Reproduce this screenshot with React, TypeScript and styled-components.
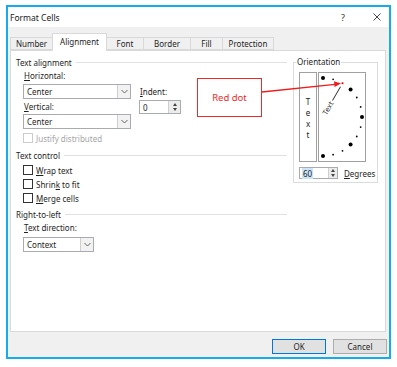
import React from "react";
import styled, { createGlobalStyle } from "styled-components";

const GlobalStyle = createGlobalStyle`
  html, body {
    margin: 0;
    padding: 0;
    background: #ffffff;
  }
  body {
    font-family: "Noto Sans", "Open Sans", sans-serif;
    font-size: 8px;
    color: #1e1e1e;
  }
`;

const Page = styled.div`
  position: relative;
  width: 397px;
  height: 367px;
  padding: 5px 0 0 6px;
  box-sizing: border-box;
  background: #ffffff;
`;

const Window = styled.div`
  width: 385px;
  height: 354px;
  box-sizing: border-box;
  border: 2px solid #16acec;
  background: #f0f0f0;
  display: flex;
  flex-direction: column;
`;

const TitleBar = styled.div`
  height: 20px;
  flex-shrink: 0;
  background: #ffffff;
  display: flex;
  align-items: center;
  padding-left: 2px;
`;

const Title = styled.span`
  font-size: 8.5px;
  color: #1a1a1a;
`;

const TitleButton = styled.span<{ $push?: boolean }>`
  width: 24px;
  height: 20px;
  display: flex;
  align-items: center;
  justify-content: center;
  margin-left: ${(p) => (p.$push ? "auto" : "10px")};
  font-size: 9px;
  color: #333;
`;

const TabRow = styled.div`
  height: 23px;
  flex-shrink: 0;
  display: flex;
  align-items: flex-end;
  padding-left: 2px;
`;

const Tab = styled.div<{ $w: number; $active?: boolean }>`
  position: relative;
  z-index: ${(p) => (p.$active ? 2 : 1)};
  width: ${(p) => p.$w}px;
  height: ${(p) => (p.$active ? 18 : 13)}px;
  margin-left: -1px;
  margin-bottom: ${(p) => (p.$active ? -1 : 0)}px;
  box-sizing: border-box;
  border: 1px solid #d9d9d9;
  border-bottom: ${(p) => (p.$active ? "none" : "1px solid #d9d9d9")};
  background: ${(p) => (p.$active ? "#ffffff" : "#f0f0f0")};
  display: flex;
  align-items: ${(p) => (p.$active ? "flex-start" : "center")};
  padding-top: ${(p) => (p.$active ? 2 : 0)}px;
  justify-content: center;
  font-size: 8px;
  &:first-child {
    margin-left: 0;
  }
`;

const Panel = styled.div`
  height: 282px;
  flex-shrink: 0;
  margin: 0 3px 0 2px;
  box-sizing: border-box;
  border: 1px solid #d9d9d9;
  background: #ffffff;
  display: flex;
  align-items: flex-start;
  padding: 5px 0 0 5px;
`;

const LeftColumn = styled.div`
  width: 271px;
  display: flex;
  flex-direction: column;
`;

const SectionHeader = styled.div<{ $mt?: number }>`
  height: 12px;
  margin-top: ${(p) => p.$mt ?? 0}px;
  display: flex;
  align-items: center;
  gap: 4px;
  white-space: nowrap;
  &::after {
    content: "";
    flex: 1;
    height: 1px;
    background: #e0e0e0;
  }
`;

const Indented = styled.div`
  padding-left: 7px;
  display: flex;
  flex-direction: column;
`;

const Label = styled.div<{ $mt?: number }>`
  height: 12px;
  line-height: 12px;
  margin-top: ${(p) => p.$mt ?? 0}px;
  padding-left: 1px;
  white-space: nowrap;
`;

const Accel = styled.span`
  text-decoration: underline;
  text-underline-offset: 1px;
`;

const AlignRow = styled.div`
  display: flex;
  gap: 8px;
`;

const Stack = styled.div<{ $mt?: number }>`
  display: flex;
  flex-direction: column;
  margin-top: ${(p) => p.$mt ?? 0}px;
`;

const Select = styled.div<{ $w: number; $mt?: number }>`
  width: ${(p) => p.$w}px;
  height: 15px;
  margin-top: ${(p) => p.$mt ?? 0}px;
  box-sizing: border-box;
  border: 1px solid #a9abb0;
  background: #ffffff;
  display: flex;
`;

const SelectValue = styled.span`
  flex: 1;
  padding-left: 3px;
  line-height: 13px;
`;

const DropButton = styled.span`
  width: 12px;
  border-left: 1px solid #cfcfcf;
  background: #f2f2f2;
  display: flex;
  align-items: center;
  justify-content: center;
`;

const Spinner = styled.div<{ $w: number; $h: number; $mt?: number }>`
  width: ${(p) => p.$w}px;
  height: ${(p) => p.$h}px;
  margin-top: ${(p) => p.$mt ?? 0}px;
  box-sizing: border-box;
  border: 1px solid #a9abb0;
  background: #ffffff;
  display: flex;
`;

const SpinValue = styled.span<{ $sel?: boolean }>`
  flex: 1;
  padding-left: 2px;
  display: flex;
  align-items: center;
  span {
    background: ${(p) => (p.$sel ? "#cce4f7" : "transparent")};
    padding: 0 1px;
  }
`;

const SpinButtons = styled.span<{ $w: number }>`
  width: ${(p) => p.$w}px;
  border-left: 1px solid #cfcfcf;
  background: #ececec;
  display: flex;
  flex-direction: column;
  align-items: center;
  justify-content: space-evenly;
`;

const Arrow = styled.span<{ $up?: boolean }>`
  width: 0;
  height: 0;
  border-left: 2.5px solid transparent;
  border-right: 2.5px solid transparent;
  ${(p) => (p.$up ? "border-bottom: 3px solid #444;" : "border-top: 3px solid #444;")}
`;

const CheckRow = styled.div<{ $mt?: number; $disabled?: boolean }>`
  height: 12px;
  margin-top: ${(p) => p.$mt ?? 0}px;
  display: flex;
  align-items: center;
  gap: 3px;
  color: ${(p) => (p.$disabled ? "#a6a6a6" : "#1e1e1e")};
`;

const CheckBox = styled.span<{ $disabled?: boolean }>`
  width: 10px;
  height: 10px;
  box-sizing: border-box;
  border: 1px solid ${(p) => (p.$disabled ? "#cccccc" : "#333333")};
  background: #ffffff;
`;

const Group = styled.div`
  position: relative;
  width: 85px;
  height: 121px;
  margin: 6px 0 0 6px;
  box-sizing: border-box;
  border: 1px solid #dcdcdc;
  padding: 9px 0 0 5px;
`;

const Legend = styled.span`
  position: absolute;
  top: -7px;
  left: 2px;
  padding: 0 1px;
  background: #ffffff;
  line-height: 12px;
`;

const DialRow = styled.div`
  display: flex;
  gap: 1px;
`;

const VerticalText = styled.div`
  width: 18px;
  height: 90px;
  box-sizing: border-box;
  border: 1px solid #a0a0a0;
  display: flex;
  flex-direction: column;
  align-items: center;
  justify-content: center;
  line-height: 11px;
  padding-top: 1px;
`;

const DialBox = styled.div`
  width: 48px;
  height: 90px;
  box-sizing: border-box;
  border: 1px solid #a0a0a0;
  svg {
    display: block;
  }
`;

const DegreesRow = styled.div`
  display: flex;
  align-items: center;
  margin-top: 5px;
  gap: 6px;
`;

const Footer = styled.div`
  flex: 1;
  display: flex;
  justify-content: flex-end;
  align-items: flex-start;
  padding: 7px 2px 0 0;
  gap: 7px;
`;

const Button = styled.div<{ $primary?: boolean }>`
  width: 54px;
  height: 15px;
  box-sizing: border-box;
  border: 1px solid ${(p) => (p.$primary ? "#0078d7" : "#adadad")};
  background: #e1e1e1;
  display: flex;
  align-items: center;
  justify-content: center;
  font-size: 8px;
`;

const Callout = styled.div`
  position: absolute;
  left: 197px;
  top: 78px;
  width: 65px;
  height: 39px;
  box-sizing: border-box;
  border: 1px solid #ee2a2a;
  background: #ffffff;
  display: flex;
  align-items: center;
  justify-content: center;
  color: #ee2a2a;
  font-size: 9.5px;
`;

const Overlay = styled.svg`
  position: absolute;
  left: 0;
  top: 0;
  pointer-events: none;
`;

const Chevron = () => (
  <svg width="7" height="5" viewBox="0 0 7 5">
    <path d="M0.5 1 L3.5 4 L6.5 1" fill="none" stroke="#555" strokeWidth="0.9" />
  </svg>
);

const tabs = [
  { name: "Number", w: 43 },
  { name: "Alignment", w: 55, active: true },
  { name: "Font", w: 38 },
  { name: "Border", w: 48 },
  { name: "Fill", w: 33 },
  { name: "Protection", w: 52 },
];

// dots around the dial, every 15 degrees from +90 to -90
const cx = 4;
const cy = 44;
const radius = 39;
const dots = Array.from({ length: 13 }, (_, i) => {
  const deg = 90 - i * 15;
  const rad = (deg * Math.PI) / 180;
  return {
    deg,
    x: cx + radius * Math.cos(rad),
    y: cy - radius * Math.sin(rad),
    big: deg % 45 === 0,
  };
});

function Dial() {
  return (
    <svg width="46" height="88" viewBox="0 0 46 88">
      {dots.map((d) =>
        d.deg === 60 ? (
          <circle key={d.deg} cx={d.x} cy={d.y} r={1.1} fill="#ff0000" />
        ) : (
          <circle key={d.deg} cx={d.x} cy={d.y} r={d.big ? 2 : 0.9} fill="#000" />
        )
      )}
      <g transform={`rotate(-60 ${cx} ${cy})`}>
        <text x={cx + 3} y={cy + 2.6} fontSize="7.5" fill="#333" fontFamily="Noto Sans, sans-serif">
          Text
        </text>
        <line x1={cx + 19} y1={cy} x2={cx + 35} y2={cy} stroke="#333" strokeWidth="0.9" />
      </g>
    </svg>
  );
}

export default function App() {
  return (
    <Page>
      <GlobalStyle />
      <Window>
        <TitleBar>
          <Title>Format Cells</Title>
          <TitleButton $push>?</TitleButton>
          <TitleButton>
            <svg width="8" height="8" viewBox="0 0 8 8">
              <path d="M0.5 0.5 L7.5 7.5 M7.5 0.5 L0.5 7.5" stroke="#333" strokeWidth="0.9" />
            </svg>
          </TitleButton>
        </TitleBar>

        <TabRow>
          {tabs.map((t) => (
            <Tab key={t.name} $w={t.w} $active={t.active}>
              {t.name}
            </Tab>
          ))}
        </TabRow>

        <Panel>
          <LeftColumn>
            <SectionHeader>Text alignment</SectionHeader>
            <Indented>
              <AlignRow>
                <Stack $mt={2}>
                  <Label>
                    <Accel>H</Accel>orizontal:
                  </Label>
                  <Select $w={108} $mt={2}>
                    <SelectValue>Center</SelectValue>
                    <DropButton>
                      <Chevron />
                    </DropButton>
                  </Select>
                  <Label $mt={2}>
                    <Accel>V</Accel>ertical:
                  </Label>
                  <Select $w={108} $mt={1}>
                    <SelectValue>Center</SelectValue>
                    <DropButton>
                      <Chevron />
                    </DropButton>
                  </Select>
                </Stack>
                <Stack $mt={18}>
                  <Label>
                    <Accel>I</Accel>ndent:
                  </Label>
                  <Spinner $w={42} $h={14} $mt={2}>
                    <SpinValue>
                      <span>0</span>
                    </SpinValue>
                    <SpinButtons $w={11}>
                      <Arrow $up />
                      <Arrow />
                    </SpinButtons>
                  </Spinner>
                </Stack>
              </AlignRow>
              <CheckRow $mt={3} $disabled>
                <CheckBox $disabled />
                Justify distributed
              </CheckRow>
            </Indented>

            <SectionHeader $mt={5}>Text control</SectionHeader>
            <Indented>
              <CheckRow $mt={3}>
                <CheckBox />
                <span>
                  <Accel>W</Accel>rap text
                </span>
              </CheckRow>
              <CheckRow $mt={2}>
                <CheckBox />
                <span>
                  Shrin<Accel>k</Accel> to fit
                </span>
              </CheckRow>
              <CheckRow $mt={2}>
                <CheckBox />
                <span>
                  <Accel>M</Accel>erge cells
                </span>
              </CheckRow>
            </Indented>

            <SectionHeader $mt={4}>Right-to-left</SectionHeader>
            <Indented>
              <Label $mt={2}>
                <Accel>T</Accel>ext direction:
              </Label>
              <Select $w={71} $mt={3}>
                <SelectValue>Context</SelectValue>
                <DropButton>
                  <Chevron />
                </DropButton>
              </Select>
            </Indented>
          </LeftColumn>

          <Group>
            <Legend>Orientation</Legend>
            <DialRow>
              <VerticalText>
                <span>T</span>
                <span>e</span>
                <span>x</span>
                <span>t</span>
              </VerticalText>
              <DialBox>
                <Dial />
              </DialBox>
            </DialRow>
            <DegreesRow>
              <Spinner $w={39} $h={12}>
                <SpinValue $sel>
                  <span>60</span>
                </SpinValue>
                <SpinButtons $w={8}>
                  <Arrow $up />
                  <Arrow />
                </SpinButtons>
              </Spinner>
              <span>
                <Accel>D</Accel>egrees
              </span>
            </DegreesRow>
          </Group>
        </Panel>

        <Footer>
          <Button $primary>OK</Button>
          <Button>Cancel</Button>
        </Footer>
      </Window>

      <Callout>Red dot</Callout>
      <Overlay width="397" height="367" viewBox="0 0 397 367">
        <line x1="262" y1="92" x2="335" y2="84.3" stroke="#ee1c1c" strokeWidth="1.3" />
        <polygon points="341,83.6 334,81.2 334.6,87" fill="#ee1c1c" />
      </Overlay>
    </Page>
  );
}
